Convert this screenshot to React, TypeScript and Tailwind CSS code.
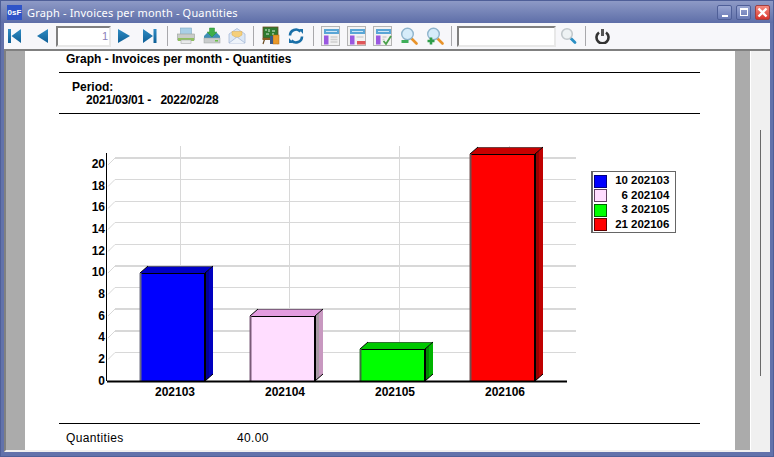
import React from "react";

const Sep = ({ ml, mr }: { ml: string; mr: string }) => (
  <div className={`w-[1px] h-[20px] bg-[#a8a8ac] ${ml} ${mr}`} />
);

const Nav = ({ d }: { d: string }) => (
  <svg width="15" height="16" viewBox="0 0 15 16">
    <defs>
      <linearGradient id="ng" x1="0" y1="0" x2="0" y2="1">
        <stop offset="0" stopColor="#2f8cc4" />
        <stop offset="1" stopColor="#0f5f96" />
      </linearGradient>
    </defs>
    <path d={d} fill="url(#ng)" />
  </svg>
);

const Printer = () => (
  <svg width="18" height="18" viewBox="0 0 18 18">
    <rect x="3.5" y="1" width="11" height="7" fill="#a8cfe6" stroke="#7fa9c4" strokeWidth="0.6" />
    <rect x="0.5" y="7" width="17" height="6" fill="#c9ccc9" stroke="#9aa09a" strokeWidth="0.6" />
    <rect x="1" y="11" width="16" height="3" fill="#8fbf5f" />
    <rect x="4" y="13" width="10" height="3.5" fill="#e8eaea" stroke="#a5a8a8" strokeWidth="0.6" />
  </svg>
);

const Download = () => (
  <svg width="18" height="18" viewBox="0 0 18 18">
    <path d="M1 9 L4 6 H14 L17 9 V15 H1 Z" fill="#3f8fb5" />
    <rect x="1" y="11" width="16" height="5" fill="#c9cccc" stroke="#9aa0a0" strokeWidth="0.5" />
    <rect x="12" y="13" width="3" height="1.5" fill="#6cc04a" />
    <path d="M6.5 1 H11.5 V5 H14 L9 10 L4 5 H6.5 Z" fill="#3fae48" stroke="#2a8a38" strokeWidth="0.5" />
  </svg>
);

const Mail = () => (
  <svg width="18" height="18" viewBox="0 0 18 18">
    <path d="M1 7 L9 1.5 L17 7 V16 H1 Z" fill="#dbe7f5" stroke="#9fb2d2" strokeWidth="0.7" />
    <path d="M4 8 V4.5 H14 V8 L9 11 Z" fill="#f5cf7a" stroke="#d9a850" strokeWidth="0.5" />
    <path d="M1 16 L9 10 L17 16" fill="#eef3fa" stroke="#9fb2d2" strokeWidth="0.7" />
  </svg>
);

const Board = () => (
  <svg width="18" height="20" viewBox="0 0 18 20">
    <rect x="1" y="1" width="15" height="11" fill="#2f7a2f" stroke="#6a4a20" strokeWidth="0.8" />
    <path d="M3 4 h2 M7 3 v3 M10 5 h3 M4 8 h3 M10 8 h2" stroke="#d8ecd8" strokeWidth="1" />
    <path d="M3 12 L1 18 M14 12 L16 18" stroke="#6a4a20" strokeWidth="1.2" />
    <rect x="0.5" y="12" width="11" height="2" fill="#8a5a20" />
    <rect x="11" y="9" width="6" height="9" fill="#e8982a" stroke="#b06a15" strokeWidth="0.5" />
    <rect x="8" y="10" width="3" height="8" fill="#3a5a8a" />
  </svg>
);

const Refresh = () => (
  <svg width="16" height="16" viewBox="0 0 16 16" fill="none">
    <path d="M2 7.5 A6 6 0 0 1 12.5 3.6" stroke="#1a6fa8" strokeWidth="2.6" />
    <path d="M14 8.5 A6 6 0 0 1 3.5 12.4" stroke="#1a6fa8" strokeWidth="2.6" />
    <path d="M11 1 L15 1 L15 6 Z" fill="#1a6fa8" />
    <path d="M5 15 L1 15 L1 10 Z" fill="#1a6fa8" />
  </svg>
);

const Report = ({ kind }: { kind: "plain" | "red" | "check" }) => (
  <svg width="19" height="20" viewBox="0 0 19 20">
    <rect x="0.5" y="0.5" width="18" height="19" fill="#f2f2f2" stroke="#b4b4b4" />
    <rect x="3" y="3" width="15" height="5" fill="#5aa6d6" />
    <rect x="5" y="5" width="11" height="1" fill="#cfe6f4" />
    <rect x="3" y="9.5" width="4.5" height="9" fill="#9a58e0" />
    {kind === "plain" && (
      <path d="M9.5 11 h7 M9.5 13.5 h7 M9.5 16 h7" stroke="#d0d0d0" strokeWidth="1.4" />
    )}
    {kind === "red" && (
      <>
        <path d="M9.5 11 h7" stroke="#d0d0d0" strokeWidth="1.4" />
        <rect x="10" y="15" width="8.5" height="3.5" fill="#e0565a" />
      </>
    )}
    {kind === "check" && (
      <>
        <path d="M9.5 11 h4 M9.5 13.5 h2" stroke="#d0d0d0" strokeWidth="1.4" />
        <path d="M10.5 15 L13 18 L18 10" stroke="#4aa04a" strokeWidth="1.8" fill="none" />
      </>
    )}
  </svg>
);

const Lens = ({ sign }: { sign?: "minus" | "plus" }) => (
  <svg width="18" height="18" viewBox="0 0 18 18" fill="none">
    <path d="M11 11 L16.5 16.5" stroke="#e8932a" strokeWidth="2.6" strokeLinecap="round" />
    <circle cx="7.5" cy="7" r="5.8" fill="#d6ecfa" stroke="#8fb4cc" strokeWidth="1.4" />
    {sign === "minus" && <rect x="1.5" y="13" width="7" height="3" fill="#3fae5a" />}
    {sign === "plus" && (
      <path d="M5 10.5 v7 M1.5 14 h7" stroke="#2f9e4a" strokeWidth="2.6" />
    )}
  </svg>
);

const SearchIcon = () => (
  <svg width="17" height="18" viewBox="0 0 17 18" fill="none">
    <path d="M10.5 11 L15 15.5" stroke="#2a8fc4" strokeWidth="2.8" strokeLinecap="round" />
    <circle cx="7" cy="7" r="5.3" fill="#eef2f4" stroke="#c2c8cc" strokeWidth="1.6" />
  </svg>
);

const Power = () => (
  <svg width="15" height="16" viewBox="0 0 15 16" fill="none">
    <path d="M4 4.5 A6 6 0 1 0 11 4.5" stroke="#333" strokeWidth="2.6" />
    <rect x="6" y="1" width="3" height="7" fill="#555" />
  </svg>
);

const grid: [number, number][] = [
  [158, 2], [179.5, 1], [201.5, 1], [222.5, 1], [244.5, 1],
  [266, 2], [287.5, 1], [309, 2], [331, 2], [352.5, 1],
];
const yLabels = [20, 18, 16, 14, 12, 10, 8, 6, 4, 2, 0];
const vert = [180.5, 289.5, 399.5, 509.5];

const bars = [
  { x: 140, top: 273, label: "202103", lx: 175, front: "#0000ff", t: "#0000c8", s1: "#00009a", s2: "#0000c0", edge: "#6c6c80", back: "#50507a" },
  { x: 250, top: 316, label: "202104", lx: 285, front: "#ffddff", t: "#e49ce0", s1: "#a89aa4", s2: "#c898c0", edge: "#7a5a78", back: "#806080" },
  { x: 360, top: 349, label: "202105", lx: 395, front: "#00ff00", t: "#00c800", s1: "#008a00", s2: "#00b400", edge: "#3a703a", back: "#307030" },
  { x: 470, top: 154, label: "202106", lx: 505, front: "#ff0000", t: "#c80000", s1: "#9a0000", s2: "#c00000", edge: "#705050", back: "#704040" },
];

const Chart = () => (
  <svg
    width="710"
    height="309"
    viewBox="25 114 710 309"
    className="block"
    style={{ fontFamily: '"Liberation Sans", Arial, sans-serif' }}
  >
    {vert.map((x) => (
      <line key={x} x1={x} x2={x} y1={146} y2={374} stroke="#d8d8d8" strokeWidth="1" />
    ))}
    {grid.map(([y, w]) => (
      <g key={y}>
        <line x1={115} x2={576} y1={y} y2={y} stroke="#d8d8d8" strokeWidth={w} />
        <line x1={108} x2={115} y1={y + 7} y2={y} stroke="#d8d8d8" strokeWidth="1" />
      </g>
    ))}
    <line x1={106.5} x2={106.5} y1={153} y2={381} stroke="#000" strokeWidth="1" />
    {bars.map((b) => (
      <g key={b.label}>
        <polygon points={`${b.x + 65},${b.top} ${b.x + 73},${b.top - 7} ${b.x + 73},374 ${b.x + 65},381`} fill={b.s2} />
        <polygon points={`${b.x + 65},${b.top} ${b.x + 69},${b.top - 3.5} ${b.x + 69},377.5 ${b.x + 65},381`} fill={b.s1} />
        <polygon
          points={`${b.x},${b.top} ${b.x + 8},${b.top - 7} ${b.x + 73},${b.top - 7} ${b.x + 65},${b.top}`}
          fill={b.t}
        />
        <line x1={b.x + 8} x2={b.x + 73} y1={b.top - 6.5} y2={b.top - 6.5} stroke={b.back} strokeWidth="1" />
        <line x1={b.x} x2={b.x + 8} y1={b.top} y2={b.top - 7} stroke="#000" strokeWidth="1" />
        <line x1={b.x + 65} x2={b.x + 73} y1={b.top} y2={b.top - 7} stroke="#000" strokeWidth="1" />
        <line x1={b.x + 65} x2={b.x + 73} y1={381} y2={374} stroke="#000" strokeWidth="1" />
        <rect x={b.x} y={b.top} width={65} height={381 - b.top} fill={b.front} />
        <line x1={b.x} x2={b.x + 65} y1={b.top + 0.5} y2={b.top + 0.5} stroke="#000" strokeWidth="1" />
        <line x1={b.x + 0.5} x2={b.x + 0.5} y1={b.top} y2={381} stroke={b.edge} strokeWidth="2" />
        <line x1={b.x + 65} x2={b.x + 65} y1={b.top} y2={381} stroke="#000" strokeWidth="2" />
        <text x={b.lx} y={396} textAnchor="middle" fontSize="12" fontWeight="700" fill="#000">
          {b.label}
        </text>
      </g>
    ))}
    <rect x={107} y={380.5} width={460} height={2} fill="#000" />
    {yLabels.map((v, i) => (
      <text key={v} x={105} y={168 + i * 21.68} textAnchor="end" fontSize="12" fontWeight="700" fill="#000">
        {v}
      </text>
    ))}
  </svg>
);

const legend = [
  { c: "#0000ff", n: "10", l: "202103", b: "#000080" },
  { c: "#ffddff", n: "6", l: "202104", b: "#604060" },
  { c: "#00ff00", n: "3", l: "202105", b: "#006000" },
  { c: "#ff0000", n: "21", l: "202106", b: "#600000" },
];

export default function App() {
  return (
    <div className="w-[774px] h-[457px] flex flex-col overflow-hidden bg-[#6272ab] border border-[#4f5f98] font-['Liberation_Sans',Arial,sans-serif]">
      {/* Title bar */}
      <div className="h-[22px] shrink-0 flex items-center pl-[6px] pr-[3px] bg-gradient-to-b from-[#8e9ac6] to-[#5e6ea8]">
        <div className="w-[15px] h-[15px] bg-[#2f54c8] text-white text-[8px] leading-[15px] font-bold text-center font-['Liberation_Sans',sans-serif]">
          0sF
        </div>
        <span className="ml-[5px] text-[11px] leading-none text-white font-['Noto_Sans',sans-serif] tracking-[0.17px]">
          Graph - Invoices per month - Quantities
        </span>
        <div className="ml-auto flex gap-[4px] items-center">
          <div className="w-[15px] h-[15px] rounded-[2px] border border-[#4f5f98] bg-gradient-to-b from-[#9aa6d2] to-[#6a7ab4] flex items-end justify-center pb-[2px]">
            <div className="w-[6px] h-[2px] bg-white" />
          </div>
          <div className="w-[15px] h-[15px] rounded-[2px] border border-[#4f5f98] bg-gradient-to-b from-[#9aa6d2] to-[#6a7ab4] flex items-center justify-center">
            <div className="w-[8px] h-[8px] border border-white border-t-2" />
          </div>
          <div className="w-[15px] h-[15px] rounded-[2px] border border-[#a04040] bg-gradient-to-b from-[#f58a80] to-[#d8302a] flex items-center justify-center">
            <svg width="11" height="11" viewBox="0 0 11 11">
              <path d="M1.5 1.5 L9.5 9.5 M9.5 1.5 L1.5 9.5" stroke="#fff" strokeWidth="2.4" />
            </svg>
          </div>
        </div>
      </div>
      {/* Toolbar */}
      <div className="h-[28px] shrink-0 mx-[3px] bg-[#f7f7fa] border-b-2 border-[#808080] flex items-center pl-[4px]">
        <Nav d="M0 1 H3 V15 H0 Z M13 1 V15 L3.5 8 Z" />
        <div className="ml-[13px]"><Nav d="M12 1 V15 L1 8 Z" /></div>
        <div className="ml-[5px] w-[55px] h-[21px] bg-white border-2 border-t-[#808080] border-l-[#808080] border-b-[#e8e8e8] border-r-[#e8e8e8] text-right pr-[1px] text-[11px] leading-[17px] text-[#8a7fb8]">
          1
        </div>
        <div className="ml-[6px]"><Nav d="M1 1 V15 L13 8 Z" /></div>
        <div className="ml-[11px]"><Nav d="M0 1 V15 L10 8 Z M10.5 1 H13.5 V15 H10.5 Z" /></div>
        <Sep ml="ml-[9px]" mr="mr-[9px]" />
        <Printer />
        <div className="ml-[8px]"><Download /></div>
        <div className="ml-[7px]"><Mail /></div>
        <Sep ml="ml-[7px]" mr="mr-[8px]" />
        <Board />
        <div className="ml-[8px]"><Refresh /></div>
        <Sep ml="ml-[9px]" mr="mr-[7px]" />
        <Report kind="plain" />
        <div className="ml-[7px]"><Report kind="red" /></div>
        <div className="ml-[7px]"><Report kind="check" /></div>
        <div className="ml-[8px]"><Lens sign="minus" /></div>
        <div className="ml-[8px]"><Lens sign="plus" /></div>
        <Sep ml="ml-[7px]" mr="mr-[5px]" />
        <div className="w-[99px] h-[21px] bg-white border-2 border-t-[#808080] border-l-[#808080] border-b-[#e8e8e8] border-r-[#e8e8e8]" />
        <div className="ml-[4px]"><SearchIcon /></div>
        <Sep ml="ml-[8px]" mr="mr-[9px]" />
        <Power />
      </div>
      {/* Body */}
      <div className="flex-1 min-h-0 mx-[3px] mb-[4px] flex border-l-2 border-[#808080] border-b-2 border-b-[#f0f0f0] bg-[#f0f0f0]">
        <div className="w-[19px] shrink-0 bg-[#ababab]" />
        <div className="w-[710px] shrink-0 bg-white overflow-hidden relative">
          <div className="ml-[34px] w-[641px]">
            <div className="h-[22px] border-b border-black pl-[7px] text-[12px] leading-[16px] font-bold text-black">
              Graph - Invoices per month - Quantities
            </div>
            <div className="h-[41px] border-b border-black pl-[13px] pt-[8px] text-[12px] leading-[13px] font-bold text-black">
              <div>Period:</div>
              <div className="pl-[14px] whitespace-pre tracking-[-0.2px]">2021/03/01 -   2022/02/28</div>
            </div>
          </div>
          <Chart />
          <div className="ml-[34px] w-[641px] border-t border-black pl-[7px] pt-[7px] flex text-[12px] leading-[14px] text-black tracking-[0.35px]">
            <span className="w-[171px]">Quantities</span>
            <span>40.00</span>
          </div>
          <div className="absolute left-[566px] top-[120px] w-[85px] h-[62px] bg-white border border-[#666] border-l-2 pl-[1px] pt-[2px] flex flex-col gap-[0.5px]">
            {legend.map((r) => (
              <div key={r.l} className="h-[14px] flex items-center text-[11.5px] leading-none font-bold text-black">
                <div className="w-[13px] h-[13px] border shrink-0" style={{ backgroundColor: r.c, borderColor: r.b }} />
                <span className="w-[21px] text-right">{r.n}</span>
                <span className="ml-[3px]">{r.l}</span>
              </div>
            ))}
          </div>
        </div>
        <div className="w-[16px] shrink-0 bg-[#ababab] border-r border-white" />
        <div className="flex-1 relative pl-[9px] pt-[79px]">
          <div className="w-[1px] h-[246px] bg-[#6a6a6a]" />
        </div>
      </div>
    </div>
  );
}
